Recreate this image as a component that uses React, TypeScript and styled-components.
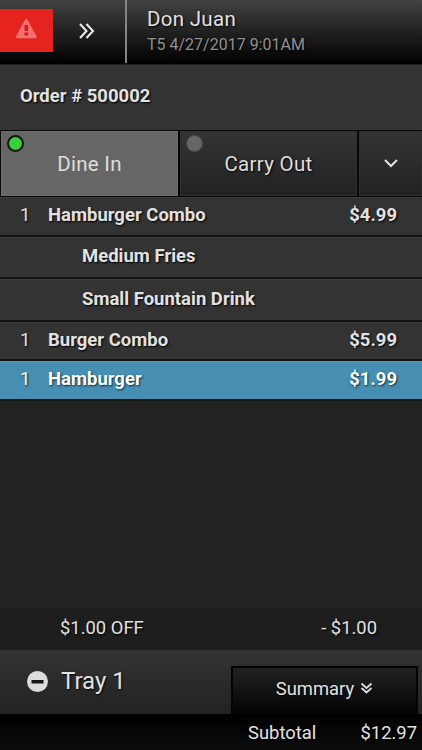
import React from "react";
import styled, { createGlobalStyle } from "styled-components";

const GlobalStyle = createGlobalStyle`
  * { box-sizing: border-box; }
  body { margin: 0; background: #222; }
`;

const Screen = styled.main`
  width: 422px;
  height: 750px;
  overflow: hidden;
  display: flex;
  flex-direction: column;
  background: #222;
  color: #e2e2e2;
  font-family: Roboto, sans-serif;
  font-size: 18.4px;
  text-shadow: 1px 1px 2px #000;
  white-space: nowrap;
  > * { min-height: 0; }
`;

const Header = styled.header`
  display: flex;
  flex: 0 0 64px;
  background: linear-gradient(#424242, #000);
`;

const Alert = styled.button`
  width: 53px;
  height: 43px;
  margin-top: 9px;
  border: 0;
  background: #e5231f;
  display: flex;
  align-items: flex-start;
  padding: 8px 0 0 15px;
`;

const Expand = styled.div`
  width: 72px;
  padding: 22px 0 0 25px;
`;

const Divider = styled.div`
  width: 2px;
  height: 63px;
  background: #858585;
`;

const User = styled.div`
  padding: 6px 0 0 20px;
`;

const UserName = styled.div`
  font-size: 20.5px;
  line-height: 27px;
  letter-spacing: 0.3px;
`;

const Session = styled.div`
  font-size: 16px;
  line-height: 24px;
  color: #929292;
`;

const OrderTitle = styled.h1`
  flex: 0 0 66px;
  margin: 0;
  padding: 0 0 0 20px;
  font-size: 18.5px;
  font-weight: 700;
  line-height: 62px;
  background: #333;
  border-top: 1px solid #1f1f1f;
`;

const Tabs = styled.nav`
  flex: 0 0 67px;
  display: grid;
  grid-template-columns: 177px 177px 1fr;
  gap: 2px;
  padding: 1px 0 1px 1px;
  background: #070707;
`;

const Tab = styled.div<{ $active?: boolean }>`
  position: relative;
  display: flex;
  align-items: center;
  justify-content: center;
  font-size: 20.5px;
  letter-spacing: 0.3px;
  color: #ddd;
  border: 1px solid ${(p) => (p.$active ? "#6e6e6e" : "#303030")};
  background: ${(p) => (p.$active ? "#666" : "linear-gradient(#343434, #222)")};
  text-shadow: ${(p) => (p.$active ? "none" : "1px 1px 2px #000")};
`;

const Status = styled.span<{ $on?: boolean }>`
  position: absolute;
  top: 3px;
  left: 5px;
  width: 17px;
  height: 17px;
  border-radius: 50%;
  border: ${(p) => (p.$on ? "2px solid #111" : "1px solid #484848")};
  background: ${(p) => (p.$on ? "#38d038" : "#666")};
`;

const Item = styled.div<{ $height: number; $selected?: boolean }>`
  flex: 0 0 ${(p) => p.$height}px;
  display: grid;
  grid-template-columns: 28px 1fr auto;
  padding: 0 25px 0 20px;
  line-height: ${(p) => 2 * Math.ceil(p.$height / 2) - 6}px;
  font-size: 18.5px;
  font-weight: 700;
  color: ${(p) => (p.$selected ? "#fff" : "#e2e2e2")};
  background: ${(p) => (p.$selected ? "#478eb3" : "#333")};
  border-top: 1px solid ${(p) => (p.$selected ? "#5b9bbb" : "#3b3b3b")};
  border-bottom: 2px solid #101214;
  text-shadow: 1px 1px 2px ${(p) => (p.$selected ? "#0a2c3c" : "#000")};
`;

const Quantity = styled.span`
  font-weight: 400;
`;

const ItemName = styled.span<{ $nested?: boolean }>`
  padding-left: ${(p) => (p.$nested ? 34 : 0)}px;
`;

const Discount = styled.div`
  flex: 0 0 41px;
  margin-top: auto;
  display: flex;
  justify-content: space-between;
  padding: 0 45px 0 60px;
  line-height: 37px;
  background: #1e1e1e;
`;

const Tray = styled.div`
  flex: 0 0 64px;
  display: flex;
  justify-content: space-between;
  padding: 0 4px 0 27px;
  background: linear-gradient(#333, #222);
  border-top: 1px solid #353535;
`;

const TrayName = styled.div`
  display: flex;
  gap: 13px;
  font-size: 24px;
  line-height: 61px;
  svg { margin-top: 20px; }
`;

const Summary = styled.div`
  width: 187px;
  height: 48px;
  margin-top: 15px;
  display: flex;
  justify-content: center;
  gap: 6px;
  line-height: 41px;
  border: 2px solid #030303;
  border-bottom: 0;
  background: linear-gradient(#222, #030303);
  svg { margin-top: 14px; }
`;

const Total = styled.footer`
  flex: 0 0 36px;
  display: flex;
  justify-content: space-between;
  padding: 0 5px 0 248px;
  line-height: 37px;
  background: linear-gradient(#000, #0c0c0c);
`;

type OrderLine = {
  name: string;
  height: number;
  quantity?: number;
  price?: string;
  selected?: boolean;
};

const lines: OrderLine[] = [
  { name: "Hamburger Combo", height: 40, quantity: 1, price: "$4.99" },
  { name: "Medium Fries", height: 42 },
  { name: "Small Fountain Drink", height: 43 },
  { name: "Burger Combo", height: 39, quantity: 1, price: "$5.99" },
  { name: "Hamburger", height: 40, quantity: 1, price: "$1.99", selected: true },
];

export default function App() {
  return (
    <>
      <GlobalStyle />
      <Screen>
        <Header>
          <Alert aria-label="Alert">
            <svg width="23" height="22" viewBox="0 0 23 22">
              <path d="M11.3 3 20.5 20H2Z" fill="#f2716e" stroke="#f2716e" strokeWidth="2.5" strokeLinejoin="round" />
              <path d="M9.5 8h3.6v6H9.5ZM9.5 15.5h3.6v3H9.5Z" fill="#c91e1e" />
            </svg>
          </Alert>
          <Expand>
            <svg width="18" height="18" viewBox="0 0 18 18" fill="none" stroke="#eee" strokeWidth="2">
              <path d="m2 2 6.5 7L2 16M8.5 2 15 9l-6.5 7" />
            </svg>
          </Expand>
          <Divider />
          <User>
            <UserName>Don Juan</UserName>
            <Session>T5 4/27/2017 9:01AM</Session>
          </User>
        </Header>
        <OrderTitle>Order # 500002</OrderTitle>
        <Tabs>
          <Tab $active><Status $on />Dine In</Tab>
          <Tab><Status />Carry Out</Tab>
          <Tab>
            <svg width="16" height="12" viewBox="0 0 16 12" fill="none" stroke="#e2e2e2" strokeWidth="2">
              <path d="m2 2 6 6 6-6" />
            </svg>
          </Tab>
        </Tabs>
        {lines.map((line) => (
          <Item key={line.name} $height={line.height} $selected={line.selected}>
            <Quantity>{line.quantity}</Quantity>
            <ItemName $nested={!line.quantity}>{line.name}</ItemName>
            <span>{line.price}</span>
          </Item>
        ))}
        <Discount>
          <span>$1.00 OFF</span>
          <span>- $1.00</span>
        </Discount>
        <Tray>
          <TrayName>
            <svg width="21" height="21" viewBox="0 0 21 21">
              <circle cx="10.5" cy="10.5" r="10.5" fill="#dcdcdc" />
              <path d="M4.5 9h12v3.5h-12Z" fill="#181818" />
            </svg>
            <span>Tray 1</span>
          </TrayName>
          <Summary>
            Summary
            <svg width="13" height="13" viewBox="0 0 13 13" fill="none" stroke="#ddd" strokeWidth="1.8">
              <path d="m1.5 1.5 5 4.5 5-4.5M1.5 6l5 4.5 5-4.5" />
            </svg>
          </Summary>
        </Tray>
        <Total>
          <span>Subtotal</span>
          <span>$12.97</span>
        </Total>
      </Screen>
    </>
  );
}
